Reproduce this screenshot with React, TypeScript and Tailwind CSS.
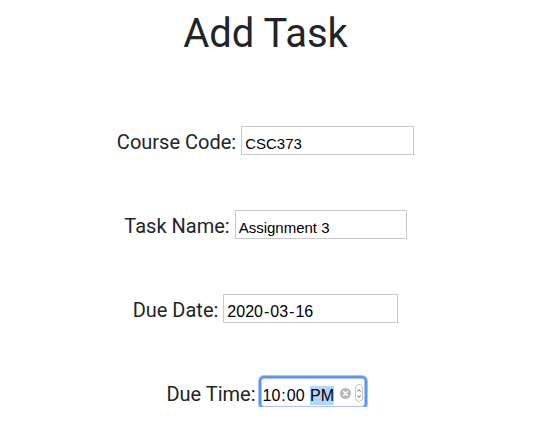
import React from "react";

const labelCls = "text-[20px] leading-[20px] text-[#212529] font-['Roboto',sans-serif]";
const boxCls =
  "h-[29px] border border-[#c9c9c9] bg-white text-black font-['Liberation_Sans',Arial,sans-serif] whitespace-nowrap";

function Row({ label, children }: { label: string; children: React.ReactNode }) {
  return (
    <div className="flex h-[29px] items-baseline justify-center gap-[5px]">
      <span className={labelCls}>{label}</span>
      {children}
    </div>
  );
}

function TextBox({ value, width }: { value: string; width: string }) {
  return (
    <div className={`${boxCls} ${width} text-[15px] pl-[3px] pt-[6px]`}>{value}</div>
  );
}

function DateBox({ value }: { value: string }) {
  const parts = value.split("-");
  return (
    <div className={`${boxCls} w-[175px] text-[16px] pl-[2px] pt-[5px]`}>
      {parts.map((p, i) => (
        <React.Fragment key={i}>
          {i > 0 && <span>-</span>}
          <span className="px-[1px]">{p}</span>
        </React.Fragment>
      ))}
    </div>
  );
}

function TimeBox() {
  return (
    <div className="relative h-[29px] w-[104px] rounded-[3px] border border-[#a9c3f5] bg-white shadow-[0_0_0_2px_#6393f1,0_0_0_3px_#a8c2f6] font-['Liberation_Sans',Arial,sans-serif] text-[16px] text-black pt-[5px] whitespace-pre">
      <span className="px-[1px]">10</span>
      <span>:</span>
      <span className="px-[1px]">00</span>
      <span> </span>
      <span className="bg-[#b4d5fe] py-[1px]">PM</span>
      {/* clear button */}
      <span className="absolute left-[78px] top-[9px] flex h-[11px] w-[11px] items-center justify-center rounded-full bg-[#b9b9b9]">
        <svg width="5" height="5" viewBox="0 0 5 5">
          <path d="M0.5 0.5 L4.5 4.5 M4.5 0.5 L0.5 4.5" stroke="#fff" strokeWidth="1.3" strokeLinecap="round" />
        </svg>
      </span>
      {/* stepper */}
      <span className="absolute left-[93px] top-[5px] flex h-[18px] w-[8px] flex-col items-center justify-center gap-[3px] rounded-[4px] border border-[#c4c4c4]">
        <svg width="4" height="3" viewBox="0 0 4 3">
          <path d="M0.3 2.6 L2 0.6 L3.7 2.6" stroke="#555" strokeWidth="0.9" fill="none" />
        </svg>
        <svg width="4" height="3" viewBox="0 0 4 3">
          <path d="M0.3 0.4 L2 2.4 L3.7 0.4" stroke="#555" strokeWidth="0.9" fill="none" />
        </svg>
      </span>
    </div>
  );
}

export default function App() {
  return (
    <div className="w-[531px] bg-white pt-[10px]">
      <h1 className="text-center text-[40px] leading-[48px] font-normal text-[#212529] font-['Roboto',sans-serif]">
        Add Task
      </h1>

      <div className="mt-[68px] flex flex-col gap-[55px]">
        <Row label="Course Code:">
          <TextBox value="CSC373" width="w-[173px]" />
        </Row>
        <Row label="Task Name:">
          <TextBox value="Assignment 3" width="w-[172px]" />
        </Row>
        <Row label="Due Date:">
          <DateBox value="2020-03-16" />
        </Row>
        <Row label="Due Time:">
          <TimeBox />
        </Row>
      </div>
    </div>
  );
}
